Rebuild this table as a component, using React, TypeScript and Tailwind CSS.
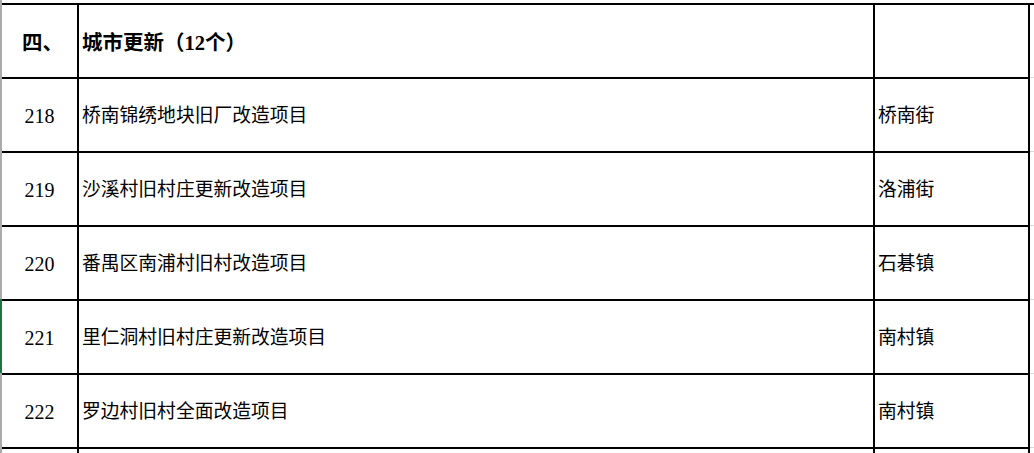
const rows = [
  { no: '218', name: '桥南锦绣地块旧厂改造项目', area: '桥南街' },
  { no: '219', name: '沙溪村旧村庄更新改造项目', area: '洛浦街' },
  { no: '220', name: '番禺区南浦村旧村改造项目', area: '石碁镇' },
  { no: '221', name: '里仁洞村旧村庄更新改造项目', area: '南村镇' },
  { no: '222', name: '罗边村旧村全面改造项目', area: '南村镇' },
  { no: '', name: '', area: '' },
];

export default function App() {
  return (
    <div
      className="w-[1034px] h-[453px] overflow-hidden bg-white flex text-black text-[18.8px]"
      style={{ fontFamily: '"Liberation Serif", "Noto Sans CJK SC", serif' }}
    >
      {/* row header edge */}
      <div className="w-[2px] flex flex-col shrink-0">
        <div className="h-[299px] shrink-0 bg-[#ababab]" />
        <div className="h-[74px] shrink-0 bg-[#217346]" />
        <div className="flex-1 bg-[#ababab]" />
      </div>

      <div className="flex flex-col pt-[3px]">
        {/* section header */}
        <div className="flex h-[76px] shrink-0 border-t-2 border-black text-[20.5px] font-bold">
          <div className="w-[77px] border-r-2 border-b-2 border-black flex items-center pl-5 pt-1">
            四、
          </div>
          <div className="w-[796px] border-r-2 border-b-2 border-black flex items-center pl-[3px] pt-1">
            城市更新（12个）
          </div>
          <div className="w-[155px] border-r-2 border-b-2 border-black" />
          <div className="w-[4px] border-b border-[#d9d9d9] mb-[1px]" />
        </div>

        {rows.map((r, i) => (
          <div key={i} className="flex h-[74px] shrink-0">
            <div className="w-[77px] border-r-2 border-b-2 border-black flex items-center justify-center pt-0.5 text-[20px]">
              {r.no}
            </div>
            <div className="w-[796px] border-r-2 border-b-2 border-black flex items-center pl-[3px] pt-0.5">
              {r.name}
            </div>
            <div className="w-[155px] border-r-2 border-b-2 border-black flex items-center pl-[3px] pt-0.5">
              {r.area}
            </div>
            <div className="w-[4px] border-b border-[#d9d9d9] mb-[1px]" />
          </div>
        ))}
      </div>
    </div>
  );
}
